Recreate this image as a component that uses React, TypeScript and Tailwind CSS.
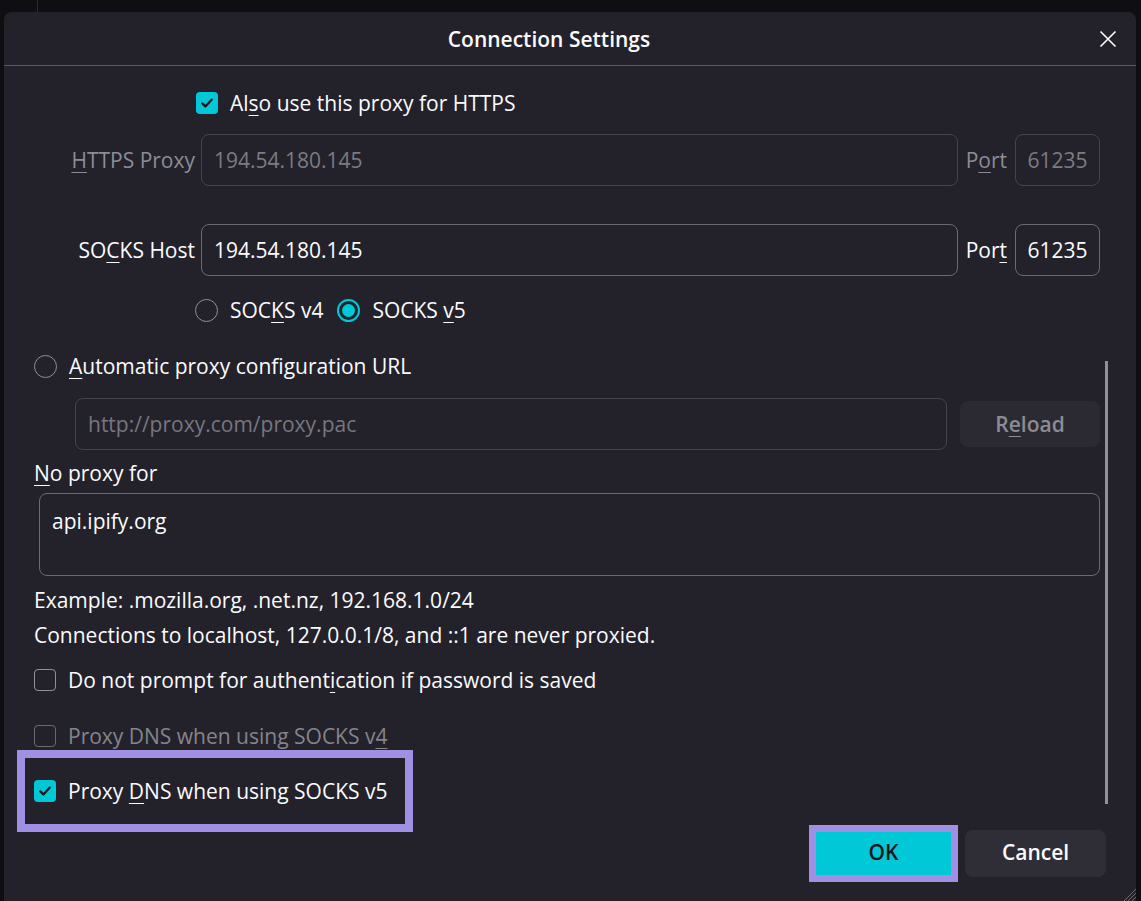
import React from 'react';

const FONT = "font-['Open_Sans','Noto_Sans',sans-serif]";

// underlined access key letter
function U({ children }: { children: React.ReactNode }) {
  return <span className="underline underline-offset-[4px] decoration-[1px]">{children}</span>;
}

function Check({ checked, disabled }: { checked?: boolean; disabled?: boolean }) {
  if (checked) {
    return (
      <div className="w-[22px] h-[22px] shrink-0 rounded-[4px] bg-[#00c8d7] flex items-center justify-center">
        <svg width="16" height="16" viewBox="0 0 16 16" fill="none">
          <path d="M3.2 8.4 L6.4 11.4 L12.8 4.6" stroke="#15141a" strokeWidth="2.2" strokeLinecap="round" strokeLinejoin="round" />
        </svg>
      </div>
    );
  }
  return (
    <div
      className={`w-[22px] h-[22px] shrink-0 rounded-[4px] border ${
        disabled ? 'border-[#6a6971]' : 'border-[#8f8f9d]'
      }`}
    />
  );
}

function Radio({ checked }: { checked?: boolean }) {
  if (checked) {
    return (
      <div className="w-[23px] h-[23px] shrink-0 rounded-full border-2 border-[#00c8d7] flex items-center justify-center">
        <div className="w-[13px] h-[13px] rounded-full bg-[#00c8d7]" />
      </div>
    );
  }
  return <div className="w-[23px] h-[23px] shrink-0 rounded-full border border-[#8f8f9d]" />;
}

export default function App() {
  return (
    <div className={`h-[901px] w-full overflow-hidden bg-[#0f0f13] flex flex-col ${FONT}`}>
      {/* window behind the dialog */}
      <div className="h-[12px] shrink-0 flex">
        <div className="ml-[37px] w-[1px] h-full bg-[#2b2a31]" />
      </div>

      <div className="relative flex-1 ml-[4px] mr-[5px] rounded-t-[8px] bg-[#23222b] flex flex-col text-[#fbfbfe]">
        {/* Header */}
        <div className="h-[54px] shrink-0 flex items-center border-b border-[#5b5a62]">
          <div className="flex-1 text-center text-[21px] font-semibold leading-[28px]">Connection Settings</div>
          <div className="w-[42px] flex items-center pl-[5px]">
            <svg width="18" height="18" viewBox="0 0 18 18" fill="none">
              <path d="M1.5 1.5 L16.5 16.5 M16.5 1.5 L1.5 16.5" stroke="#fbfbfe" strokeWidth="1.6" />
            </svg>
          </div>
        </div>

        {/* Body */}
        <div className="flex text-[21px] leading-[24px]">
          <div className="flex-1 pl-[30px] flex flex-col">
            {/* Also use this proxy for HTTPS */}
            <div className="mt-[25px] h-[24px] flex items-center ml-[162px] gap-[12px]">
              <Check checked />
              <span>
                Al<U>s</U>o use this proxy for HTTPS
              </span>
            </div>

            {/* HTTPS Proxy */}
            <div className="mt-[19px] h-[52px] flex items-center text-[#8d8c94]">
              <div className="w-[161px] shrink-0 text-right whitespace-nowrap">
                <U>H</U>TTPS Proxy
              </div>
              <div className="ml-[6px] flex-1 h-[52px] rounded-[8px] border border-[#45444c] flex items-center px-[12px] text-[#7c7b83]">
                194.54.180.145
              </div>
              <div className="mx-[8px]">
                P<U>o</U>rt
              </div>
              <div className="w-[85px] h-[52px] rounded-[8px] border border-[#45444c] flex items-center justify-center text-[#7c7b83]">
                61235
              </div>
            </div>

            {/* SOCKS Host */}
            <div className="mt-[38px] h-[52px] flex items-center">
              <div className="w-[161px] shrink-0 text-right whitespace-nowrap">
                SO<U>C</U>KS Host
              </div>
              <div className="ml-[6px] flex-1 h-[52px] rounded-[8px] border border-[#6b6a72] flex items-center px-[12px]">
                194.54.180.145
              </div>
              <div className="mx-[8px]">
                Por<U>t</U>
              </div>
              <div className="w-[85px] h-[52px] rounded-[8px] border border-[#6b6a72] flex items-center justify-center">
                61235
              </div>
            </div>

            {/* SOCKS version */}
            <div className="mt-[22px] h-[24px] flex items-center ml-[161px]">
              <Radio />
              <span className="ml-[12px]">
                SOC<U>K</U>S v4
              </span>
              <div className="ml-[14px]">
                <Radio checked />
              </div>
              <span className="ml-[12px]">
                SOCKS <U>v</U>5
              </span>
            </div>

            {/* Automatic proxy configuration */}
            <div className="mt-[32px] h-[24px] flex items-center gap-[12px]">
              <Radio />
              <span>
                <U>A</U>utomatic proxy configuration URL
              </span>
            </div>

            <div className="mt-[20px] h-[52px] flex items-center">
              <div className="ml-[41px] flex-1 h-[52px] rounded-[8px] border border-[#45444c] flex items-center px-[12px] text-[#77767e]">
                http://proxy.com/proxy.pac
              </div>
              <button className="ml-[13px] w-[140px] h-[46px] rounded-[8px] bg-[#2b2a33] text-[#8d8c94] font-semibold">
                R<U>e</U>load
              </button>
            </div>

            {/* No proxy for */}
            <div className="mt-[11px] h-[24px]">
              <U>N</U>o proxy for
            </div>
            <div className="mt-[8px] ml-[5px] h-[83px] rounded-[8px] border border-[#6b6a72] px-[12px] pt-[15px]">
              api.ipify.org
            </div>

            <div className="mt-[12px] h-[24px]">Example: .mozilla.org, .net.nz, 192.168.1.0/24</div>
            <div className="mt-[11px] h-[24px]">Connections to localhost, 127.0.0.1/8, and ::1 are never proxied.</div>

            <div className="mt-[21px] h-[24px] flex items-center gap-[12px]">
              <Check />
              <span>
                Do not prompt for authent<U>i</U>cation if password is saved
              </span>
            </div>

            <div className="mt-[32px] h-[24px] flex items-center gap-[12px] text-[#85848c]">
              <Check disabled />
              <span>
                Proxy DNS when using SOCKS v<U>4</U>
              </span>
            </div>

            {/* highlighted option */}
            <div className="mt-[2px] -ml-[17px] w-[396px] border-[8px] border-[#a08fe3] pl-[9px] py-[21px]">
              <div className="h-[24px] flex items-center gap-[12px] whitespace-nowrap">
                <Check checked />
                <span>
                  Proxy <U>D</U>NS when using SOCKS v5
                </span>
              </div>
            </div>
          </div>

          {/* scrollbar */}
          <div className="w-[36px] shrink-0">
            <div className="ml-[5px] mt-[295px] w-[3px] h-[443px] bg-[#8f8f9d]" />
          </div>
        </div>

        {/* Footer */}
        <div className="-mt-[8px] h-[58px] flex items-center justify-end pr-[30px] text-[21px]">
          <div className="border-[7px] border-[#a08fe3]">
            <button className="w-[135px] h-[43px] bg-[#00c8d7] text-[#15141a] font-semibold">OK</button>
          </div>
          <button className="ml-[7px] w-[141px] h-[47px] rounded-[8px] bg-[#2f2e37] text-[#fbfbfe] font-semibold">
            Cancel
          </button>
        </div>

        {/* resize grip */}
        <svg className="absolute right-0 bottom-0" width="16" height="16" viewBox="0 0 16 16" fill="none">
          <path d="M16 4 L4 16 M16 8 L8 16 M16 12 L12 16" stroke="#6b6a72" strokeWidth="1" />
        </svg>
      </div>
    </div>
  );
}
